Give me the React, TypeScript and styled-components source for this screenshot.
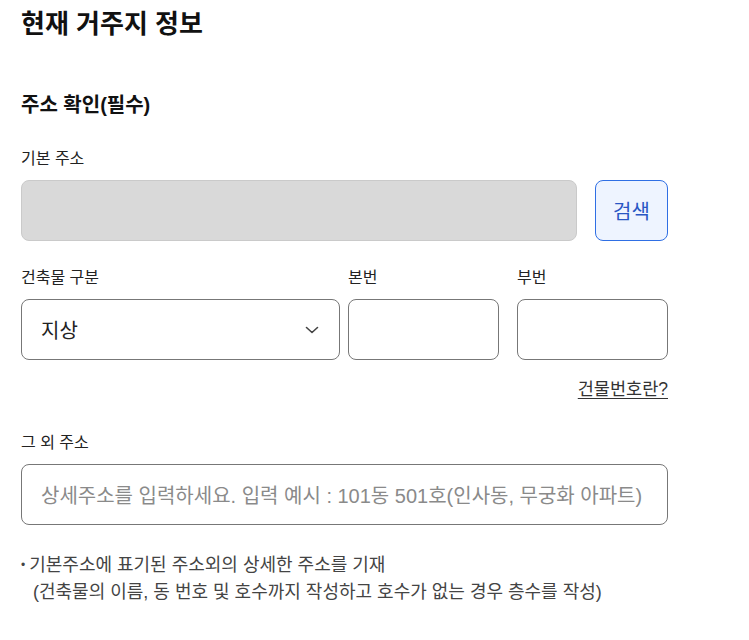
import styled, { createGlobalStyle } from "styled-components";

const GlobalStyle = createGlobalStyle`
  body {
    margin: 0;
    background: #fff;
    font-family: "Liberation Sans", "Noto Sans CJK KR", sans-serif;
    color: #1a1a1a;
  }
  * { box-sizing: border-box; }
`;

const Page = styled.main`
  width: 647px;
  margin-left: 21px;
  padding-top: 6px;
`;

const Title = styled.h1`
  margin: 0;
  font-size: 26px;
  font-weight: 700;
  line-height: 36px;
  color: #111;
`;

const SectionTitle = styled.h2`
  margin: 49px 0 0;
  font-size: 20px;
  font-weight: 700;
  line-height: 28px;
  color: #111;
`;

const Label = styled.label`
  display: block;
  font-size: 16px;
  line-height: 22px;
  color: #222;
  margin-bottom: 10px;
`;

const Field = styled.div<{ $top: number; $width?: number }>`
  margin-top: ${(p) => p.$top}px;
  width: ${(p) => (p.$width ? `${p.$width}px` : "auto")};
`;

const Row = styled.div<{ $gap: number; $top?: number }>`
  display: flex;
  align-items: flex-end;
  gap: ${(p) => p.$gap}px;
  margin-top: ${(p) => p.$top ?? 0}px;
`;

const Box = styled.div<{ $disabled?: boolean }>`
  height: 61px;
  border-radius: 8px;
  border: 1px solid ${(p) => (p.$disabled ? "#cacaca" : "#777")};
  background: ${(p) => (p.$disabled ? "#d9d9d9" : "#fff")};
  display: flex;
  align-items: center;
  padding: 0 19px;
  font-size: 20px;
  color: #222;
  flex: 1;
`;

const SelectBox = styled(Box)`
  justify-content: space-between;
  padding-right: 20px;
`;

const Placeholder = styled.span`
  color: #8a8a8a;
  font-size: 20px;
  white-space: nowrap;
`;

const SearchButton = styled.button`
  width: 73px;
  height: 61px;
  border-radius: 8px;
  border: 1px solid #2f6fe4;
  background: #eef4ff;
  color: #2856c4;
  font-family: inherit;
  font-size: 20px;
  padding: 0;
`;

const HelpLink = styled.a`
  display: block;
  text-align: right;
  margin-top: 17px;
  font-size: 17.5px;
  line-height: 24px;
  color: #333;
  text-decoration: underline;
  text-underline-offset: 3px;
`;

const Notes = styled.ul`
  list-style: none;
  margin: 27px 0 0;
  padding: 0;
  font-size: 18px;
  line-height: 27px;
  color: #444;
`;

const NoteItem = styled.li`
  &::before {
    content: "•";
    font-size: 12px;
    margin-right: 4px;
    vertical-align: 2px;
  }
`;

const NoteSub = styled.div`
  padding-left: 12px;
`;

function Chevron() {
  return (
    <svg width="14" height="8" viewBox="0 0 14 8" fill="none">
      <path d="M1.5 1.5L7 6.5L12.5 1.5" stroke="#444" strokeWidth="1.6" strokeLinecap="round" strokeLinejoin="round" />
    </svg>
  );
}

export default function App() {
  return (
    <Page>
      <GlobalStyle />
      <Title>현재 거주지 정보</Title>
      <SectionTitle>주소 확인(필수)</SectionTitle>

      <Field $top={29}>
        <Label>기본 주소</Label>
        <Row $gap={18}>
          <Box $disabled />
          <SearchButton>검색</SearchButton>
        </Row>
      </Field>

      <Row $gap={8} $top={26}>
        <Field $top={0} $width={319}>
          <Label>건축물 구분</Label>
          <SelectBox>
            지상
            <Chevron />
          </SelectBox>
        </Field>
        <Field $top={0} $width={151}>
          <Label>본번</Label>
          <Box />
        </Field>
        <Field $top={0} $width={151} style={{ marginLeft: 10 }}>
          <Label>부번</Label>
          <Box />
        </Field>
      </Row>

      <HelpLink>건물번호란?</HelpLink>

      <Field $top={31}>
        <Label>그 외 주소</Label>
        <Box>
          <Placeholder>상세주소를 입력하세요. 입력 예시 : 101동 501호(인사동, 무궁화 아파트)</Placeholder>
        </Box>
      </Field>

      <Notes>
        <NoteItem>
          기본주소에 표기된 주소외의 상세한 주소를 기재
          <NoteSub>(건축물의 이름, 동 번호 및 호수까지 작성하고 호수가 없는 경우 층수를 작성)</NoteSub>
        </NoteItem>
      </Notes>
    </Page>
  );
}
